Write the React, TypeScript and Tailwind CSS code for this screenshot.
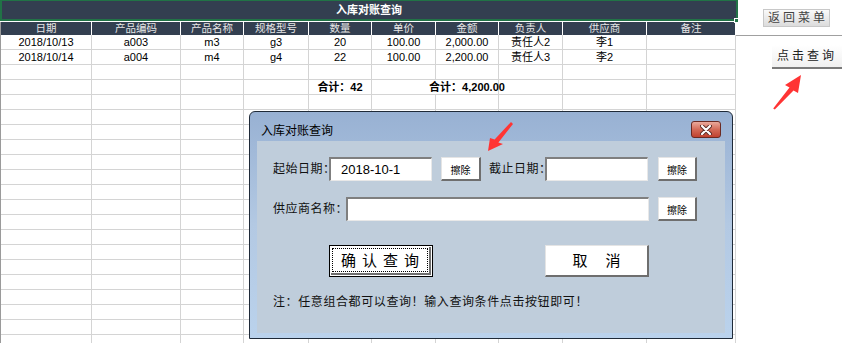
import React from 'react';

const cols = [91, 89, 63, 65, 63, 64, 63, 64, 84, 89];
const headers = ['日期', '产品编码', '产品名称', '规格型号', '数量', '单价', '金额', '负责人', '供应商', '备注'];

const rows: string[][] = [
  ['2018/10/13', 'a003', 'm3', 'g3', '20', '100.00', '2,000.00', '责任人2', '李1', ''],
  ['2018/10/14', 'a004', 'm4', 'g4', '22', '100.00', '2,200.00', '责任人3', '李2', ''],
];

const EMPTY_ROWS = 19;
const font = { fontFamily: '"Liberation Sans", "Noto Sans CJK SC", sans-serif' };

function Cell({ w, children, bold, noRight }: { w: number; children?: React.ReactNode; bold?: boolean; noRight?: boolean }) {
  return (
    <div
      className={`h-[15px] shrink-0 border-b border-[#d4d4d4] flex items-center justify-center whitespace-nowrap overflow-visible text-[11px] leading-none text-black ${noRight ? '' : 'border-r'} ${bold ? 'font-bold' : ''}`}
      style={{ width: w }}
    >
      {children}
    </div>
  );
}

function Sheet() {
  return (
    <div className="w-[736px] shrink-0 flex flex-col">
      {/* title cell, selected */}
      <div className="relative shrink-0 h-[21px] w-[738px] border-2 border-t border-[#217346] bg-[#333f50] flex items-center justify-center">
        <span className="text-[11px] font-bold text-white leading-none">入库对账查询</span>
        <div className="absolute -right-[3px] -bottom-[4px] w-[5px] h-[5px] bg-[#217346] border border-white" />
      </div>
      {/* header */}
      <div className="mt-px shrink-0 flex h-[13px] bg-[#333f50] border-l border-[#9a9a9a]">
        {headers.map((h, i) => (
          <div
            key={h}
            className="shrink-0 border-r border-white flex items-center justify-center text-[10.5px] leading-none text-[#e6e6e6]"
            style={{ width: cols[i] }}
          >
            {h}
          </div>
        ))}
      </div>
      <div className="shrink-0 border-l border-[#9a9a9a] flex flex-col">
        {rows.map((r, ri) => (
          <div key={ri} className="flex shrink-0">
            {r.map((v, i) => (
              <Cell key={i} w={cols[i]}>{v}</Cell>
            ))}
          </div>
        ))}
        <div className="flex shrink-0">
          {cols.map((w, i) => <Cell key={i} w={w} />)}
        </div>
        <div className="flex shrink-0">
          {cols.map((w, i) => (
            <Cell key={i} w={w} bold noRight={i === 5}>
              {i === 4 ? '合计：42' : i === 6 ? '合计：4,200.00' : null}
            </Cell>
          ))}
        </div>
        {Array.from({ length: EMPTY_ROWS }).map((_, ri) => (
          <div key={ri} className="flex shrink-0">
            {cols.map((w, i) => <Cell key={i} w={w} />)}
          </div>
        ))}
      </div>
    </div>
  );
}

function SidePanel() {
  return (
    <div className="flex-1 flex flex-col">
      <div className="shrink-0 mt-[9px] ml-[27px] w-[67px] h-[18px] border border-[#c8c8c8] bg-gradient-to-b from-[#fafafa] to-[#dcdcdc] flex items-center justify-center text-[12px] tracking-[3px] pl-[3px] text-[#444] leading-none whitespace-nowrap">
        返回菜单
      </div>
      <div className="shrink-0 mt-[8px] h-px bg-[#a0a0a0]" />
      <div className="shrink-0 mt-[9px] ml-[36px] h-[24px] border-b-2 border-[#7a7a7a] bg-gradient-to-b from-white to-[#f0f0f0] flex items-center pl-[5px] text-[12px] tracking-[3px] text-[#222] leading-none whitespace-nowrap">
        点击查询
      </div>
    </div>
  );
}

function SunkenInput({ w, value }: { w: number; value?: string }) {
  return (
    <div
      className="h-[24px] shrink-0 bg-white border-t-2 border-l-2 border-[#7f7f7f] border-b border-r border-b-[#e8e8e8] border-r-[#e8e8e8] flex items-center pl-[10px] text-[13px] text-black leading-none"
      style={{ width: w }}
    >
      {value}
    </div>
  );
}

function EraseBtn({ w, ml }: { w: number; ml: number }) {
  return (
    <div
      className="h-[24px] shrink-0 bg-white border-t border-l border-[#e4e4e4] border-b-2 border-r-2 border-b-[#6e6e6e] border-r-[#6e6e6e] flex items-center justify-center pt-[5px] text-[10px] text-black leading-none whitespace-nowrap"
      style={{ width: w, marginLeft: ml }}
    >
      擦除
    </div>
  );
}

function Label({ w, ml = 0, children }: { w: number; ml?: number; children: React.ReactNode }) {
  return (
    <span
      className="shrink-0 whitespace-nowrap text-[12px] tracking-[0.5px] leading-none text-[#111]"
      style={{ width: w, marginLeft: ml }}
    >
      {children}
    </span>
  );
}

function Dialog() {
  return (
    <div className="absolute left-[249px] top-[111px] w-[484px] h-[228px] rounded-t-[6px] border border-[#1f2a38] bg-gradient-to-b from-[#98b1d3] via-[#b3c9e3] to-[#bad2ec] flex flex-col">
      {/* title bar */}
      <div className="relative h-[29px] shrink-0 flex items-center pl-[11px] pt-[8px] text-[12px] text-black leading-none">
        入库对账查询
        <div className="absolute right-[11px] top-[9px] w-[30px] h-[17px] rounded-[3px] border border-[#6b2a22] bg-gradient-to-b from-[#e9a99c] via-[#d36a57] to-[#c0412f] flex items-center justify-center">
          <svg width="12" height="10" viewBox="0 0 12 10">
            <path d="M2 1 L10 9 M10 1 L2 9" stroke="#5a2a24" strokeWidth="4" strokeLinecap="round" />
            <path d="M2 1 L10 9 M10 1 L2 9" stroke="white" strokeWidth="2.2" strokeLinecap="round" />
          </svg>
        </div>
      </div>
      {/* client area */}
      <div className="mx-[7px] h-[192px] shrink-0 bg-[#bfcddb] pl-[16px] pt-[16px] text-black" style={font}>
        <div className="flex items-center">
          <Label w={56}>起始日期：</Label>
          <SunkenInput w={103} value="2018-10-1" />
          <EraseBtn w={40} ml={9} />
          <Label w={56} ml={8}>截止日期：</Label>
          <SunkenInput w={103} />
          <EraseBtn w={39} ml={10} />
        </div>
        <div className="mt-[16px] flex items-center">
          <Label w={73}>供应商名称：</Label>
          <SunkenInput w={303} />
          <EraseBtn w={39} ml={9} />
        </div>
        <div className="mt-[24px] flex items-center">
          <div className="shrink-0 ml-[56px] w-[104px] h-[32px] border border-black bg-white p-px">
            <div className="h-full border-b-2 border-r-2 border-[#6e6e6e] p-[1px]">
              <div className="h-full border border-dotted border-black flex items-center justify-center whitespace-nowrap text-[15px] tracking-[6px] pl-[6px] leading-none">
                确认查询
              </div>
            </div>
          </div>
          <div className="shrink-0 ml-[112px] w-[104px] h-[32px] bg-white border-t border-l border-[#e4e4e4] border-b-2 border-r-2 border-b-[#6e6e6e] border-r-[#6e6e6e] flex items-center justify-center whitespace-nowrap text-[15px] leading-none">
            取<span className="w-[18px]" />消
          </div>
        </div>
        <div className="mt-[19px] whitespace-nowrap text-[12px] tracking-[0.6px] leading-none text-[#111]">
          注：任意组合都可以查询！输入查询条件点击按钮即可！
        </div>
      </div>
    </div>
  );
}

export default function App() {
  return (
    <div className="relative w-[842px] h-[343px] overflow-hidden bg-white flex items-start" style={font}>
      <Sheet />
      <SidePanel />
      <Dialog />
      {/* hint arrows */}
      <svg className="absolute left-0 top-0 pointer-events-none" width="842" height="343">
        <polygon
          points="773.2,108.4 789.5,87.4 785,85 801,75 798,93 793.5,90.6 774.8,109.6"
          fill="#ff3434"
        />
        <polygon
          points="511,122 494.6,139.4 490,138 488,151 503,144 498.4,142.6 513,124"
          fill="#ff3434"
        />
      </svg>
    </div>
  );
}
